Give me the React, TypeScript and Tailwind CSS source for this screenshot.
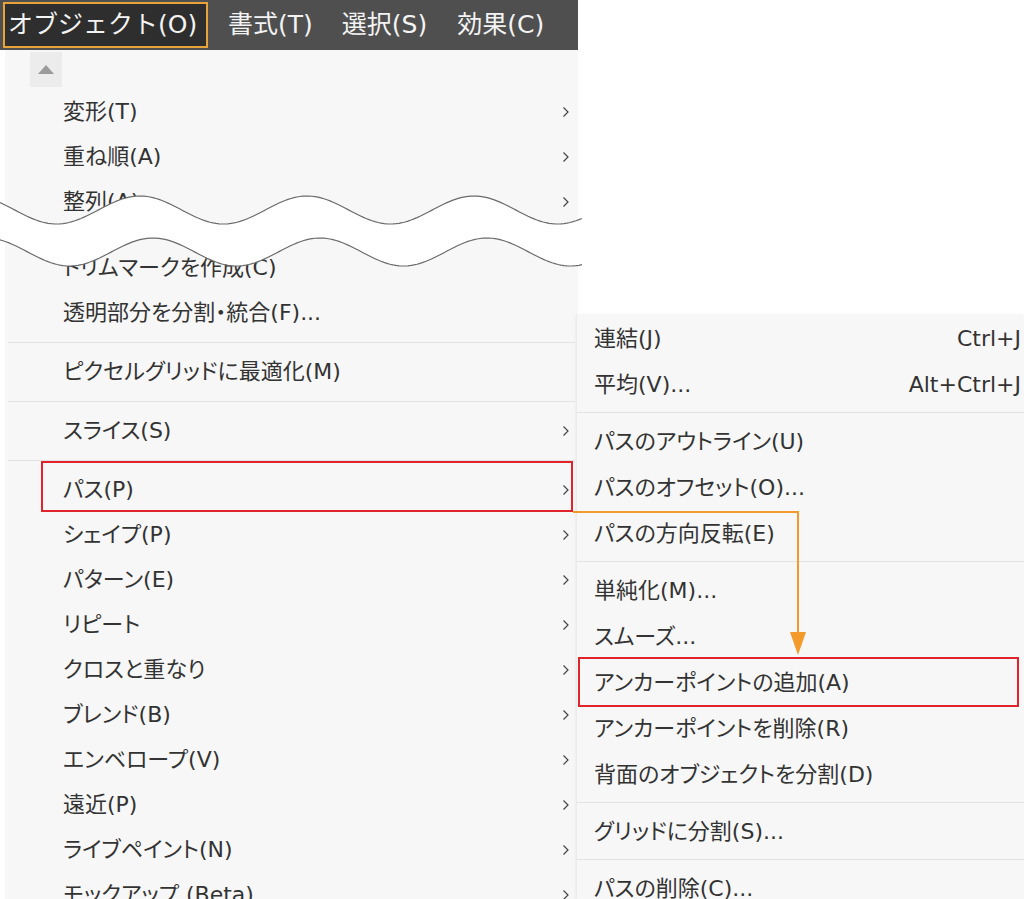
import React from 'react';

type Item = { label: string; sub?: boolean } | 'sep' | 'gap';

const mainItems: Item[] = [
  { label: '変形(T)', sub: true },
  { label: '重ね順(A)', sub: true },
  { label: '整列(A)', sub: true },
  'gap',
  { label: 'トリムマークを作成(C)' },
  { label: '透明部分を分割・統合(F)...' },
  'sep',
  { label: 'ピクセルグリッドに最適化(M)' },
  'sep',
  { label: 'スライス(S)', sub: true },
  'sep',
  { label: 'パス(P)', sub: true },
  { label: 'シェイプ(P)', sub: true },
  { label: 'パターン(E)', sub: true },
  { label: 'リピート', sub: true },
  { label: 'クロスと重なり', sub: true },
  { label: 'ブレンド(B)', sub: true },
  { label: 'エンベロープ(V)', sub: true },
  { label: '遠近(P)', sub: true },
  { label: 'ライブペイント(N)', sub: true },
  { label: 'モックアップ (Beta)', sub: true },
];

const pathItems: Array<{ label: string; key?: string } | 'sep'> = [
  { label: '連結(J)', key: 'Ctrl+J' },
  { label: '平均(V)...', key: 'Alt+Ctrl+J' },
  'sep',
  { label: 'パスのアウトライン(U)' },
  { label: 'パスのオフセット(O)...' },
  { label: 'パスの方向反転(E)' },
  'sep',
  { label: '単純化(M)...' },
  { label: 'スムーズ...' },
  { label: 'アンカーポイントの追加(A)' },
  { label: 'アンカーポイントを削除(R)' },
  { label: '背面のオブジェクトを分割(D)' },
  'sep',
  { label: 'グリッドに分割(S)...' },
  'sep',
  { label: 'パスの削除(C)...' },
];

const Chevron = () => (
  <svg width="8" height="12" viewBox="0 0 8 12" className="shrink-0">
    <polyline points="1.5,1.5 6,6 1.5,10.5" fill="none" stroke="#444" strokeWidth="1.2" />
  </svg>
);

// wavy "cut" lines across the main menu
const wave = (base: number, shift: number) => {
  const pts: string[] = [];
  for (let x = 0; x <= 582; x += 3) {
    const y = base - 14 * Math.cos((2 * Math.PI * (x - shift)) / 167);
    pts.push(`${x},${y.toFixed(2)}`);
  }
  return pts;
};

const Overlay = () => {
  const top = wave(210, 140);
  const bottom = wave(252, 153);
  const fill = `M${top.join(' L')} L${[...bottom].reverse().join(' L')} Z`;
  return (
    <svg className="absolute left-0 top-0 pointer-events-none" width="1024" height="899">
      <path d={fill} fill="#fff" />
      <path d={`M${top.join(' L')}`} fill="none" stroke="#6b6b6b" strokeWidth="1.2" />
      <path d={`M${bottom.join(' L')}`} fill="none" stroke="#6b6b6b" strokeWidth="1.2" />
      <rect x="42" y="462" width="530" height="49" fill="none" stroke="#e1232b" strokeWidth="2" />
      <rect x="579" y="658" width="439" height="48" fill="none" stroke="#e1232b" strokeWidth="2" />
      <polyline points="573,512 798,512 798,636" fill="none" stroke="#f39a2b" strokeWidth="2" />
      <polygon points="790,632 806,632 798,655" fill="#f39a2b" />
    </svg>
  );
};

export default function App() {
  return (
    <div
      className="relative w-[1024px] h-[899px] overflow-hidden bg-white flex text-[#333333]"
      style={{ fontFamily: "'DejaVu Sans', 'Noto Sans CJK JP', sans-serif" }}
    >
      <div className="w-[578px] shrink-0 flex flex-col">
        <div className="h-[50px] shrink-0 bg-[#4f4f4f] flex items-center text-[25px] text-[#f3f3f3]">
          <div className="ml-[3px] h-[46px] w-[205px] shrink-0 bg-[#2e2e2e] border-2 border-[#e8a23a] flex items-center pl-[3px] whitespace-nowrap">
            オブジェクト(O)
          </div>
          <span className="ml-[20px] whitespace-nowrap">書式(T)</span>
          <span className="ml-[29px] whitespace-nowrap">選択(S)</span>
          <span className="ml-[30px] whitespace-nowrap">効果(C)</span>
        </div>
        <div className="ml-[5px] flex-1 bg-[#f7f7f7] flex flex-col text-[22px] [font-feature-settings:'palt']">
          <div className="h-[39px] shrink-0 flex items-center">
            <div className="ml-[25px] w-[32px] h-[35px] bg-[#ececec] flex items-center justify-center">
              <svg width="16" height="9" viewBox="0 0 16 9">
                <polygon points="0,9 16,9 8,0" fill="#9a9a9a" />
              </svg>
            </div>
          </div>
          {mainItems.map((it, i) => {
            if (it === 'sep')
              return (
                <div key={i} className="h-[14px] shrink-0 flex items-center px-[3px]">
                  <div className="h-px w-full bg-[#e2e2e2]" />
                </div>
              );
            if (it === 'gap') return <div key={i} className="h-[21px] shrink-0" />;
            return (
              <div key={i} className="h-[45px] shrink-0 flex items-center justify-between pl-[58px] pr-[8px]">
                <span className="whitespace-nowrap">{it.label}</span>
                {it.sub && <Chevron />}
              </div>
            );
          })}
        </div>
      </div>
      <div className="flex-1 pt-[315px] -ml-px">
        <div className="h-full bg-[#f7f7f7] shadow-[-1px_0_3px_rgba(0,0,0,0.08)] flex flex-col text-[22px] [font-feature-settings:'palt']">
          {pathItems.map((it, i) => {
            if (it === 'sep')
              return (
                <div key={i} className="h-[11px] shrink-0 flex items-center">
                  <div className="h-px w-full bg-[#e2e2e2]" />
                </div>
              );
            return (
              <div key={i} className="h-[46px] shrink-0 flex items-center justify-between pl-[17px] pr-[3px]">
                <span className="whitespace-nowrap">{it.label}</span>
                {it.key && <span className="whitespace-nowrap">{it.key}</span>}
              </div>
            );
          })}
        </div>
      </div>
      <Overlay />
    </div>
  );
}
